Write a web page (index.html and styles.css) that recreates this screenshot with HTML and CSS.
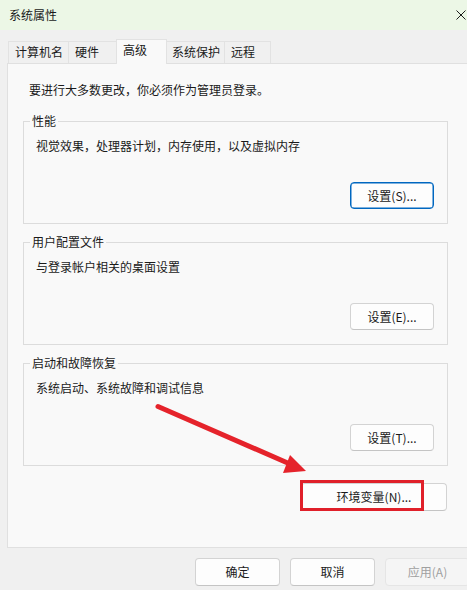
FILE: index.html
```html
<!DOCTYPE html>
<html lang="zh-CN">
<head>
<meta charset="utf-8">
<title>系统属性</title>
<link rel="stylesheet" href="styles.css">
</head>
<body>
<div class="window">
  <div class="titlebar">
    <span class="title">系统属性</span>
    <svg class="close" width="10" height="10" viewBox="0 0 10 10"><path d="M0.5 0.5 L9.5 9.5 M9.5 0.5 L0.5 9.5" stroke="#1b1b1b" stroke-width="1" fill="none"/></svg>
  </div>
  <div class="tabs">
    <div class="tab tab-computer">计算机名</div>
    <div class="tab tab-hardware">硬件</div>
    <div class="tab tab-advanced active">高级</div>
    <div class="tab tab-protect">系统保护</div>
    <div class="tab tab-remote">远程</div>
  </div>
  <div class="panel">
    <p class="intro">要进行大多数更改，你必须作为管理员登录。</p>
    <fieldset class="group">
      <legend>性能</legend>
      <p class="desc">视觉效果，处理器计划，内存使用，以及虚拟内存</p>
      <div class="group-actions"><button class="btn btn-default">设置(S)...</button></div>
    </fieldset>
    <fieldset class="group">
      <legend>用户配置文件</legend>
      <p class="desc">与登录帐户相关的桌面设置</p>
      <div class="group-actions"><button class="btn">设置(E)...</button></div>
    </fieldset>
    <fieldset class="group">
      <legend>启动和故障恢复</legend>
      <p class="desc">系统启动、系统故障和调试信息</p>
      <div class="group-actions"><button class="btn">设置(T)...</button></div>
    </fieldset>
    <div class="env-row"><button class="btn btn-env">环境变量(N)...</button></div>
  </div>
  <div class="footer">
    <button class="btn">确定</button>
    <button class="btn">取消</button>
    <button class="btn btn-disabled">应用(A)</button>
  </div>
  <svg class="annot" width="467" height="590" viewBox="0 0 467 590">
    <line x1="158" y1="406.5" x2="290" y2="464" stroke="#e5232b" stroke-width="5" stroke-linecap="round"/>
    <polygon points="306,471 283,473 290,455" fill="#e5232b"/>
    <rect x="301.5" y="481.5" width="121" height="28" fill="none" stroke="#e0202a" stroke-width="3"/>
  </svg>
</div>
</body>
</html>
```
FILE: styles.css
```css
html, body {
  margin: 0;
  padding: 0;
}
body {
  width: 467px;
  height: 590px;
  overflow: hidden;
  background: #f0f0f0;
  font-family: "Noto Sans CJK SC", "Noto Sans", sans-serif;
  font-size: 12px;
  color: #1a1a1a;
}
.window {
  position: relative;
  width: 480px;
  height: 590px;
  background: #f0f0f0;
}
.titlebar {
  height: 30px;
  background: #ecf7e6;
  display: flex;
  align-items: center;
  justify-content: space-between;
  padding: 0 14px 1px 9px;
  box-sizing: border-box;
}
.title {
  line-height: 16px;
  color: #1a1a1a;
}
.close {
  display: block;
  margin-right: 0;
}
.tabs {
  display: flex;
  align-items: flex-end;
  height: 24px;
  margin: 9px 0 0 8px;
  position: relative;
  z-index: 1;
}
.tab {
  box-sizing: border-box;
  height: 22px;
  border: 1px solid #e2e2e2;
  border-bottom: none;
  background: #f0f0f0;
  padding-left: 6px;
  line-height: 20px;
  white-space: nowrap;
  margin-left: -1px;
}
.tab-computer { width: 61px; margin-left: 0; }
.tab-hardware { width: 49px; }
.tab-advanced { width: 51px; }
.tab-protect { width: 59px; padding-left: 5px; }
.tab-remote { width: 47px; }
.tab.active {
  height: 25px;
  background: #f9f9f9;
  margin-bottom: -1px;
  position: relative;
  z-index: 2;
}
.panel {
  box-sizing: border-box;
  margin-left: 7px;
  width: 464px;
  height: 485px;
  border: 1px solid #e0e0e0;
  background: #f9f9f9;
  padding: 18px 0 0 15px;
}
.intro {
  margin: 0 0 15px 6px;
  line-height: 16px;
}
.group {
  box-sizing: border-box;
  width: 425px;
  margin: 0;
  border: 1px solid #dcdcdc;
  padding: 9px 13px 14px 6px;
  min-inline-size: 0;
}
.group + .group {
  margin-top: 10px;
}
.group legend {
  padding: 0 2px;
  line-height: 16px;
}
.desc {
  margin: 0 0 28px 6px;
  line-height: 16px;
}
.group-actions {
  display: flex;
  justify-content: flex-end;
}
.btn {
  box-sizing: border-box;
  width: 84px;
  height: 27px;
  border: 1px solid #d3d3d3;
  border-bottom-color: #c4c4c4;
  border-radius: 4px;
  background: #fdfdfd;
  font-family: inherit;
  font-size: 12px;
  color: #1a1a1a;
  padding: 0;
  line-height: 16px;
}
.btn-default {
  border: 1px solid #0067c0;
  box-shadow: inset 0 0 0 0.5px #0067c0;
}
.env-row {
  display: flex;
  justify-content: flex-end;
  width: 425px;
  padding-right: 1px;
  box-sizing: border-box;
  margin-top: 17px;
}
.btn-env {
  width: 146px;
  height: 28px;
}
.footer {
  display: flex;
  justify-content: flex-end;
  gap: 10px;
  margin-top: 10px;
  padding-right: 10px;
}
.footer .btn {
  width: 85px;
  height: 28px;
}
.btn-disabled {
  background: #f5f5f5;
  border-color: #e5e5e5;
  color: #a0a0a0;
}
.annot {
  position: absolute;
  left: 0;
  top: 0;
  pointer-events: none;
}
```
